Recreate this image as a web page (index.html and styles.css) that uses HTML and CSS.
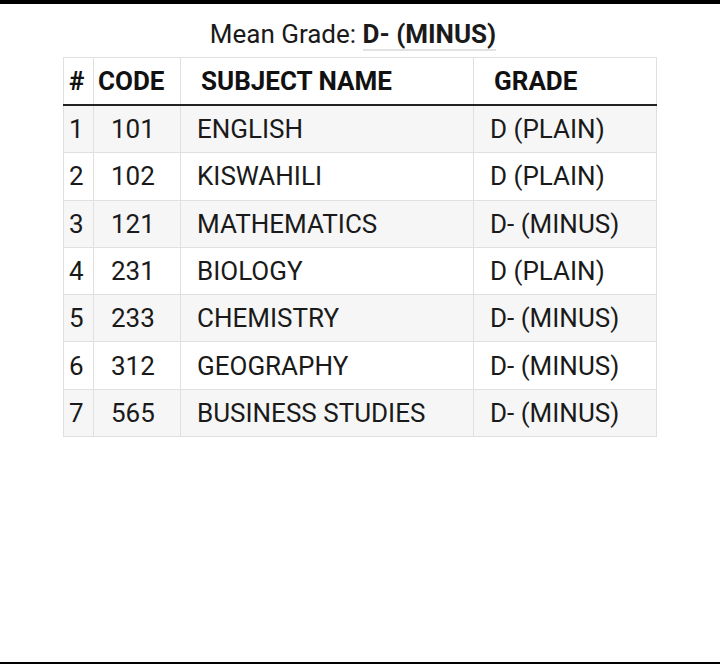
FILE: index.html
```html
<!DOCTYPE html>
<html>
<head>
<meta charset="utf-8">
<link rel="stylesheet" href="styles.css">
</head>
<body>
<div class="page">
  <h1 class="title">Mean Grade: <b class="mean">D- (MINUS)</b></h1>
  <table class="results">
    <colgroup>
      <col class="c-num"><col class="c-code"><col class="c-name"><col class="c-grade">
    </colgroup>
    <thead>
      <tr><th class="num">#</th><th class="code">CODE</th><th class="name">SUBJECT NAME</th><th class="grade">GRADE</th></tr>
    </thead>
    <tbody>
      <tr><td class="num">1</td><td class="code">101</td><td class="name">ENGLISH</td><td class="grade">D (PLAIN)</td></tr>
      <tr><td class="num">2</td><td class="code">102</td><td class="name">KISWAHILI</td><td class="grade">D (PLAIN)</td></tr>
      <tr><td class="num">3</td><td class="code">121</td><td class="name">MATHEMATICS</td><td class="grade">D- (MINUS)</td></tr>
      <tr><td class="num">4</td><td class="code">231</td><td class="name">BIOLOGY</td><td class="grade">D (PLAIN)</td></tr>
      <tr><td class="num">5</td><td class="code">233</td><td class="name">CHEMISTRY</td><td class="grade">D- (MINUS)</td></tr>
      <tr><td class="num">6</td><td class="code">312</td><td class="name">GEOGRAPHY</td><td class="grade">D- (MINUS)</td></tr>
      <tr><td class="num">7</td><td class="code">565</td><td class="name">BUSINESS STUDIES</td><td class="grade">D- (MINUS)</td></tr>
    </tbody>
  </table>
</div>
</body>
</html>
```
FILE: styles.css
```css
html, body {
  margin: 0;
  padding: 0;
  background: #fff;
}
body {
  font-family: Roboto, "Liberation Sans", sans-serif;
  color: #1a1a1a;
}
.page {
  box-sizing: border-box;
  height: 664px;
  border-top: 4px solid #000;
  border-bottom: 2px solid #000;
  display: flex;
  flex-direction: column;
  align-items: center;
}
.title {
  margin: 14px 0 0 0;
  font-size: 26px;
  line-height: 32px;
  font-weight: 400;
  padding-right: 14px;
}
.mean {
  font-weight: 700;
  border-bottom: 2px solid #e2e2e2;
}
.results {
  margin-top: 7px;
  width: 593px;
  border-collapse: collapse;
  table-layout: fixed;
  font-size: 26px;
}
.c-num { width: 30px; }
.c-code { width: 87px; }
.c-name { width: 293px; }
.c-grade { width: 183px; }
th, td {
  border: 1px solid #e0e0e0;
  height: 46px;
  padding: 0;
  text-align: left;
  white-space: nowrap;
}
tbody td {
  height: 46.3px;
}
th {
  font-weight: 700;
  color: #111;
  border-bottom: 2px solid #222;
}
tbody tr:nth-child(odd) td {
  background: #f6f6f6;
}
th.num { padding-left: 5px; }
td.num { padding-left: 5px; }
th.code { padding-left: 4px; }
td.code { padding-left: 17px; }
th.name { padding-left: 20px; }
td.name { padding-left: 16px; }
th.grade { padding-left: 20px; }
td.grade { padding-left: 16px; }
```
